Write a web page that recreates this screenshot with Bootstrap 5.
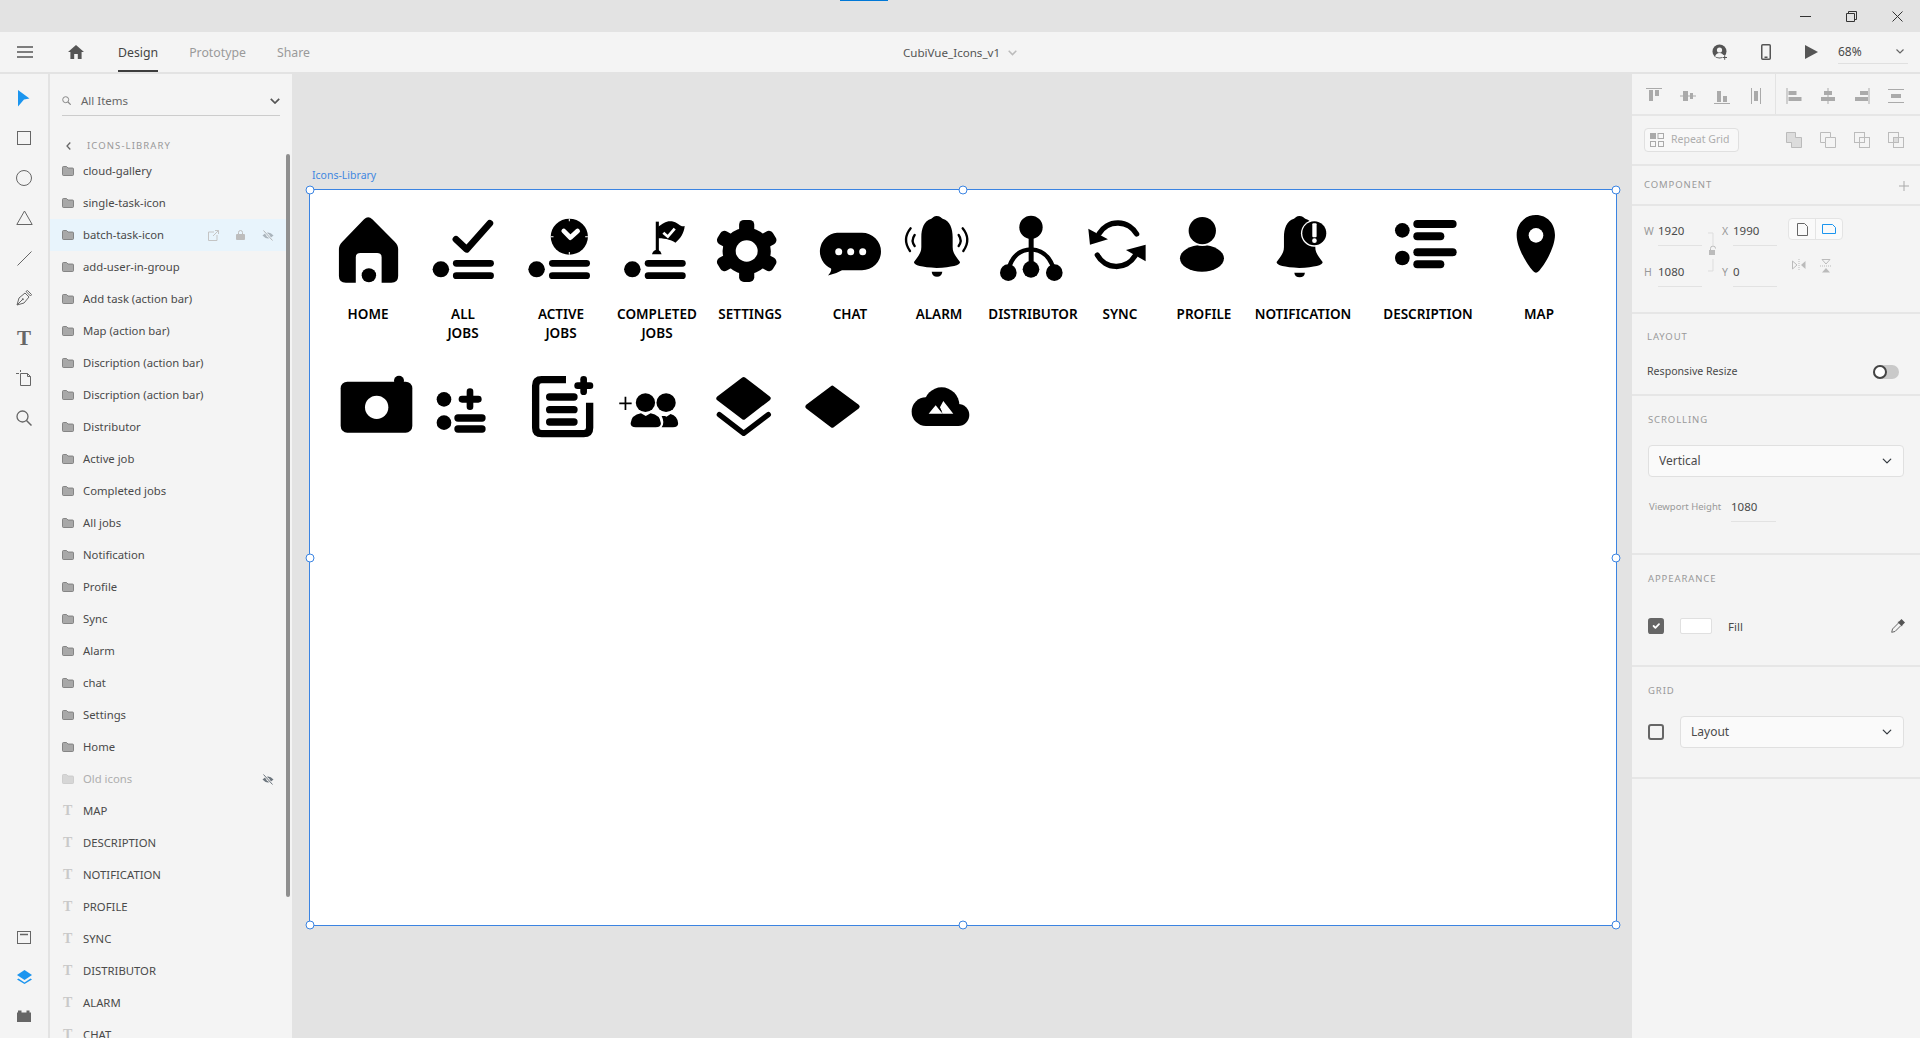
<!DOCTYPE html>
<html lang="en">
<head>
    <meta charset="UTF-8">
    <meta name="viewport" content="width=device-width, initial-scale=1.0">
    <title>CubiVue_Icons_v1</title>

    <link href="https://cdn.jsdelivr.net/npm/bootstrap@5.3.0/dist/css/bootstrap.min.css" rel="stylesheet">

    <style>
        html, body { height: 100%; overflow: hidden; }
        body { font-family: "Noto Sans", "Open Sans", sans-serif; font-size: 12px; color: #4a4a4a; background: #e3e3e3; }
        .app { width: 1920px; height: 1038px; }

        /* title bar + toolbar */
        .title-bar { height: 32px; background: #e3e3e3; position: relative; }
        .title-accent { position: absolute; left: 840px; top: 0; width: 48px; height: 1px; background: #0078d7; }
        .win-btn { width: 46px; height: 32px; }
        .tool-bar { height: 42px; background: #f4f4f4; border-bottom: 2px solid #e3e3e3; }
        .tb-btn-a { width: 50px; }
        .tb-btn-b { width: 52px; }
        .tb-nav { margin-left: 16px; gap: 31px; }
        .tb-nav .nav-link { padding: 0; height: 40px; line-height: 41px; font-size: 12.3px; color: #9a9a9a; }
        .tb-nav .nav-link.active { color: #444; border-bottom: 2px solid #3d3d3d; }
        .doc-name { font-size: 11.6px; color: #555; gap: 8px; padding-top: 1px; }
        .tb-btn-c { width: 46px; }
        .zoom-box { width: 70px; height: 24px; margin: 0 12px 0 3px; border-bottom: 1px solid #e0e0e0; font-size: 12px; }

        /* left rail */
        .main-area { height: 964px; }
        .tool-rail { width: 50px; background: #f4f4f4; border-right: 2px solid #e3e3e3; padding: 4px 0 2px; }
        .rail-btn { height: 40px; }
        .rail-btn-sm { height: 39.5px; }
        .rail-t { font-family: "Liberation Serif", serif; font-weight: 700; font-size: 21px; color: #666; line-height: 1; }

        /* layers */
        .layers-panel { width: 242px; background: #f4f4f4; position: relative; overflow: hidden; }
        .search-row { margin: 10px 12px 0; height: 32px; padding-top: 2px; border-bottom: 1px solid #ccc; color: #666; font-size: 11.5px; }
        .search-row span { margin-left: 10px; }
        .back-row { height: 20px; margin: 20px 0 0 16px; margin-bottom: -1px; }
        .back-label { margin-left: 16px; font-size: 9.5px; letter-spacing: 1.1px; color: #999; }
        .layer-list { border-radius: 0; }
        .layer-row { height: 32px; padding: 0 0 0 12px; background: transparent; border: 0; color: #4a4a4a; font-size: 11.3px; margin-right: 2px; }
        .layer-row.is-hover { background: #e8f4fc; }
        .layer-row.is-off { color: #aeaeae; }
        .layer-ic { width: 21px; flex: none; }
        .layer-t { width: 21px; flex: none; padding-left: 1px; font-family: "Liberation Serif", serif; font-weight: 700; font-size: 14px; color: #c9c9c9; line-height: 1; }
        .row-tools { margin-left: auto; padding-right: 16px; gap: 17px; }
        .scroll-thumb { position: absolute; right: 2px; top: 80px; width: 4px; height: 743px; border-radius: 2px; background: #8f8f8f; }

        /* canvas */
        .canvas-area { position: relative; background: #e3e3e3; overflow: hidden; }
        .board-name { position: absolute; left: 20px; top: 94px; font-size: 10.5px; color: #3f87e0; }
        .art-board { position: absolute; left: 17px; top: 115px; width: 1308px; height: 737px; background: #fff; border: 1px solid #3b84e2; }
        .art-icons { position: absolute; left: 0; top: 0; width: 1306px; height: 735px; }
        .handle { position: absolute; width: 9px; height: 9px; border-radius: 50%; background: #fff; border: 1px solid #3b84e2; transform: translate(-50%, -50%); }
        .h-l { left: 0; } .h-c { left: 50%; } .h-r { left: 100%; }
        .h-t { top: 0; } .h-m { top: 50%; } .h-b { top: 100%; }
        .icon-label { position: absolute; top: 115px; width: 120px; margin-left: -60px; text-align: center; font-size: 13.5px; line-height: 19px; font-weight: 600; color: #000; }
        .l-home { left: 58px; } .l-all { left: 153px; } .l-active { left: 251px; } .l-done { left: 347px; }
        .l-set { left: 440px; } .l-chat { left: 540px; } .l-alarm { left: 629px; } .l-dist { left: 723px; }
        .l-sync { left: 810px; } .l-prof { left: 894px; } .l-notif { left: 993px; } .l-desc { left: 1118px; } .l-map { left: 1229px; }

        /* right panel */
        .props-panel { width: 290px; background: #f4f4f4; border-left: 2px solid #e3e3e3; }
        .sec { border-bottom: 2px solid #e6e6e6; }
        .sec-align { height: 42px; }
        .align-group { width: 144px; gap: 18px; padding: 3px 0 0 14px; }
        .align-group + .align-group { border-left: 1px solid #e3e3e3; padding-left: 10px; width: 146px; gap: 18px; }
        .sec-repeat { height: 50px; padding: 0 0 0 12px; }
        .repeat-btn { width: 95px; height: 24px; border: 1px solid #e0e0e0; border-radius: 4px; background: #f8f8f8; color: #adadad; font-size: 10.5px; gap: 7px; padding-left: 5px; }
        .bool-group { margin-left: 47px; gap: 18px; }
        .sec-comp { height: 40px; padding: 1px 11px 0 12px; }
        .sec-title { font-size: 9.5px; letter-spacing: .9px; color: #999; }
        .sec-dim { height: 108px; padding: 11px 0 0 12px; }
        .dim-grid { display: grid; grid-template-columns: 14px 44px 20px 11px 44px; grid-auto-rows: 29px; row-gap: 12px; align-items: center; }
        .dim-lab { font-size: 10.5px; color: #999; }
        .dim-val { height: 29px; line-height: 28px; border-bottom: 1px solid #e2e2e2; font-size: 11.5px; color: #4a4a4a; }
        .dim-lock { grid-column: 3; grid-row: 1 / span 2; }
        .orient-group { margin: 1px 0 0 11px; }
        .orient-btns { width: 55px; height: 22px; border: 1px solid #e4e4e4; border-radius: 4px; background: #fafafa; }
        .orient-btns > div { flex: 1; }
        .orient-btns > div + div { border-left: 1px solid #e4e4e4; }
        .flip-btns { gap: 14px; margin: 19px 0 0 4px; }
        .sec-layout { height: 82px; padding: 16px 21px 0 15px; }
        .resize-row { margin-top: 20px; font-size: 10.6px; color: #4a4a4a; }
        .mini-switch { width: 26px; height: 14px; border-radius: 7px; background: #c9c9c9; position: relative; }
        .mini-switch::before { content: ""; position: absolute; left: 0; top: 0; width: 14px; height: 14px; border-radius: 50%; background: #fff; border: 2px solid #444; }
        .sec-scroll { height: 159px; padding: 17px 16px 0 16px; }
        .prop-select { height: 32px; padding: 0 24px 0 10px; font-size: 12px; color: #4a4a4a; background-color: #fafafa; border: 1px solid #e0e0e0; border-radius: 4px; background-position: right 11px center; background-size: 10px; box-shadow: none; }
        .scroll-select { margin-top: 18px; }
        .view-row { margin-top: 15px; }
        .view-lab { width: 83px; font-size: 9.5px; color: #999; padding-left: 1px; }
        .view-val { width: 45px; height: 30px; line-height: 30px; border-bottom: 1px solid #e2e2e2; font-size: 11.5px; }
        .sec-appear { height: 112px; padding: 17px 15px 0 16px; }
        .fill-row { margin-top: 32px; height: 16px; font-size: 11.5px; }
        .prop-check { width: 16px; height: 16px; margin: 0; flex: none; border: 2px solid #666; border-radius: 3px; background-color: transparent; box-shadow: none; }
        .prop-check:checked { background-color: #666; border-color: #666; }
        .swatch { width: 32px; height: 16px; margin: 0 16px; border: 1px solid #e0e0e0; border-radius: 2px; background: #fff; }
        .sec-grid { height: 112px; padding: 17px 16px 0 16px; }
        .grid-row { margin-top: 18px; gap: 16px; }
    </style>
</head>
<body>
    <div class="app d-flex flex-column">

        <div class="title-bar d-flex justify-content-end">
            <div class="title-accent"></div>
            <div class="win-btn d-flex align-items-center justify-content-center">
                <svg width="11" height="11" viewBox="0 0 11 11"><path d="M0 5.5h11" stroke="#333" fill="none"/></svg>
            </div>
            <div class="win-btn d-flex align-items-center justify-content-center">
                <svg width="11" height="11" viewBox="0 0 11 11"><path d="M.5 2.5h8v8h-8zM2.5 2.5v-2h8v8h-2" stroke="#333" fill="none"/></svg>
            </div>
            <div class="win-btn d-flex align-items-center justify-content-center">
                <svg width="11" height="11" viewBox="0 0 11 11"><path d="M.5.5l10 10M10.5.5l-10 10" stroke="#333" fill="none"/></svg>
            </div>
        </div>

        <header class="tool-bar d-flex align-items-stretch">
            <div class="flex-grow-1 d-flex align-items-center w-50">
                <div class="tb-btn-a d-flex justify-content-center">
                    <svg width="16" height="12" viewBox="0 0 16 12"><path d="M0 1h16M0 6h16M0 11h16" stroke="#555" stroke-width="1.6"/></svg>
                </div>
                <div class="tb-btn-b d-flex justify-content-center">
                    <svg width="16" height="14" viewBox="0 0 16 14"><path d="M8 0L0 7h2.4v7h3.8V9h3.6v5h3.8V7H16z" fill="#555"/></svg>
                </div>
                <nav class="nav tb-nav flex-nowrap">
                    <a class="nav-link active" href="#">Design</a>
                    <a class="nav-link" href="#">Prototype</a>
                    <a class="nav-link" href="#">Share</a>
                </nav>
            </div>
            <div class="doc-name d-flex align-items-center flex-shrink-0 text-nowrap">
                <span>CubiVue_Icons_v1</span>
                <svg width="9" height="6" viewBox="0 0 9 6"><path d="M.7.8l3.8 3.8L8.3.8" stroke="#bbb" stroke-width="1.5" fill="none"/></svg>
            </div>
            <div class="flex-grow-1 d-flex align-items-center justify-content-end w-50">
                <div class="tb-btn-c d-flex justify-content-center">
                    <svg width="16" height="16" viewBox="0 0 16 16"><circle cx="7.5" cy="7.5" r="7" fill="#555"/><circle cx="7.5" cy="6" r="2.6" fill="#f4f4f4"/><path d="M3 12.5q1-3.5 4.5-3.5t4.500 3.500q-4.500 2-9 0z" fill="#f4f4f4"/><path d="M10 13.5h5M12.5 11v5" stroke="#f4f4f4" stroke-width="3"/><path d="M10.5 13.5h4.500M12.700 11.200v4.600" stroke="#555"/></svg>
                </div>
                <div class="tb-btn-c d-flex justify-content-center">
                    <svg width="10" height="16" viewBox="0 0 10 16"><rect x=".75" y=".75" width="8.5" height="14.5" rx="1" fill="none" stroke="#555" stroke-width="1.5"/><rect x="3.5" y="12.5" width="3" height="1.5" fill="#555"/></svg>
                </div>
                <div class="tb-btn-c d-flex justify-content-center">
                    <svg width="13" height="14" viewBox="0 0 13 14"><path d="M0 0l13 7L0 14z" fill="#555"/></svg>
                </div>
                <div class="zoom-box d-flex align-items-center justify-content-between">
                    <span>68%</span>
                    <svg class="me-1" width="8" height="5" viewBox="0 0 8 5"><path d="M.5.5L4 4 7.5.5" stroke="#666" stroke-width="1.2" fill="none"/></svg>
                </div>
            </div>
        </header>

        <div class="main-area d-flex">

            <aside class="tool-rail d-flex flex-column flex-shrink-0">
                <div class="rail-btn d-flex align-items-center justify-content-center">
                    <svg width="12" height="17" viewBox="0 0 12 17"><path d="M0 0l11.5 8.5-5.500 1L0 16.500z" fill="#1b95ef"/></svg>
                </div>
                <div class="rail-btn d-flex align-items-center justify-content-center">
                    <svg width="14" height="14" viewBox="0 0 14 14"><rect x=".5" y=".5" width="13" height="13" fill="none" stroke="#666"/></svg>
                </div>
                <div class="rail-btn d-flex align-items-center justify-content-center">
                    <svg width="16" height="16" viewBox="0 0 16 16"><circle cx="8" cy="8" r="7.5" fill="none" stroke="#666"/></svg>
                </div>
                <div class="rail-btn d-flex align-items-center justify-content-center">
                    <svg width="17" height="15" viewBox="0 0 17 15"><path d="M8.5 0L.8 13.5h15.400z" fill="none" stroke="#666"/></svg>
                </div>
                <div class="rail-btn d-flex align-items-center justify-content-center">
                    <svg width="15" height="15" viewBox="0 0 15 15"><path d="M.5 14.5l14-14" stroke="#666" fill="none"/></svg>
                </div>
                <div class="rail-btn d-flex align-items-center justify-content-center">
                    <svg width="16" height="16" viewBox="0 0 16 16"><path d="M1 15l2-7 6-5 4 4-5 6zM1 15l5-5M10 1.5l4.5 4.500 1-1.500L11.500.5z" fill="none" stroke="#666"/><circle cx="6.8" cy="9.2" r="1" fill="#666"/></svg>
                </div>
                <div class="rail-btn d-flex align-items-center justify-content-center"><span class="rail-t">T</span></div>
                <div class="rail-btn d-flex align-items-center justify-content-center">
                    <svg width="16" height="16" viewBox="0 0 16 16"><path d="M4.5 3.5h7l3 3v9h-10zM11.5 3.5v3h3M0 3.5h3M4.5 0v2" fill="none" stroke="#666"/></svg>
                </div>
                <div class="rail-btn d-flex align-items-center justify-content-center">
                    <svg width="16" height="16" viewBox="0 0 16 16"><circle cx="6.5" cy="6.5" r="5.5" fill="none" stroke="#666" stroke-width="1.3"/><path d="M10.5 10.5l5 5" stroke="#666" stroke-width="1.5"/></svg>
                </div>
                <div class="rail-btn-sm mt-auto d-flex align-items-center justify-content-center">
                    <svg width="14" height="13" viewBox="0 0 14 13"><rect x=".5" y=".5" width="13" height="12" fill="none" stroke="#666"/><path d="M3 3.5h8" stroke="#666" stroke-width="1.5"/></svg>
                </div>
                <div class="rail-btn-sm d-flex align-items-center justify-content-center">
                    <svg width="15" height="14" viewBox="0 0 15 14"><path d="M7.5 0L15 5l-7.5 5L0 5z" fill="#1b95ef"/><path d="M1.5 8.5l6 4 6-4 1.5 1-7.500 4.500L0 9.500z" fill="#1b95ef"/></svg>
                </div>
                <div class="rail-btn-sm d-flex align-items-center justify-content-center">
                    <svg width="14" height="12" viewBox="0 0 14 12"><path d="M0 2.5h1V.5h3.500v2h5V.5h3v2h1.500V12H0z" fill="#666"/></svg>
                </div>
            </aside>

            <section class="layers-panel flex-shrink-0">
                <svg width="0" height="0" class="position-absolute">
                    <symbol id="fld" viewBox="0 0 12 10"><path d="M.5 1.5q0-1 1-1h3l1.500 1.500h4.500q1 0 1 1v5.500q0 1-1 1h-9q-1 0-1-1z" fill="#a8a8a8" stroke="#727272" stroke-width=".8"/></symbol>
                    <symbol id="fld-off" viewBox="0 0 12 10"><path d="M.5 1.5q0-1 1-1h3l1.500 1.500h4.500q1 0 1 1v5.500q0 1-1 1h-9q-1 0-1-1z" fill="#d6d6d6" stroke="#c8c8c8" stroke-width=".8"/></symbol>
                    <symbol id="eye" viewBox="0 0 12 11"><path d="M.5 5.5Q6-.5 11.500 5.500 6 11.500.5 5.500z" fill="currentColor"/><circle cx="6" cy="5.5" r="1.5" fill="#f4f4f4"/><path d="M1.5.5l9 10" stroke="#f4f4f4" stroke-width="2.2"/><path d="M1.5.5l9 10" stroke="currentColor" stroke-width="1"/></symbol>
                </svg>
                <div class="search-row d-flex align-items-center">
                    <svg width="9" height="9" viewBox="0 0 9 9"><circle cx="3.7" cy="3.7" r="3" fill="none" stroke="#888"/><path d="M6 6l2.7 2.700" stroke="#888" stroke-width="1.2"/></svg>
                    <span class="flex-grow-1">All Items</span>
                    <svg width="10" height="6" viewBox="0 0 10 6"><path d="M.8.8L5 5 9.2.8" stroke="#555" stroke-width="1.7" fill="none"/></svg>
                </div>
                <div class="back-row d-flex align-items-center">
                    <svg width="5" height="8" viewBox="0 0 5 8"><path d="M4.3.5L1 4l3.300 3.500" stroke="#666" stroke-width="1.3" fill="none"/></svg>
                    <span class="back-label">ICONS-LIBRARY</span>
                </div>
                <div class="list-group list-group-flush layer-list">
                    <div class="list-group-item layer-row d-flex align-items-center"><span class="layer-ic"><svg width="12" height="10" class="d-block"><use href="#fld"/></svg></span>cloud-gallery</div>
                    <div class="list-group-item layer-row d-flex align-items-center"><span class="layer-ic"><svg width="12" height="10" class="d-block"><use href="#fld"/></svg></span>single-task-icon</div>
                    <div class="list-group-item layer-row is-hover d-flex align-items-center"><span class="layer-ic"><svg width="12" height="10" class="d-block"><use href="#fld"/></svg></span>batch-task-icon
                        <span class="row-tools d-flex align-items-center">
                            <svg width="11" height="11" viewBox="0 0 11 11"><path d="M6 2H.5v8.500H9V5M5 6l5.500-5.500M7 .5h3.500V4" fill="none" stroke="#c4c4c4"/></svg>
                            <svg width="9" height="10" viewBox="0 0 9 10"><path d="M2.5 4V2.500a2 2 0 0 1 4 0V4" fill="none" stroke="#bdbdbd"/><rect y="4" width="9" height="6" rx="1" fill="#bdbdbd"/></svg>
                            <svg width="12" height="11" class="text-secondary opacity-50"><use href="#eye"/></svg>
                        </span>
                    </div>
                    <div class="list-group-item layer-row d-flex align-items-center"><span class="layer-ic"><svg width="12" height="10" class="d-block"><use href="#fld"/></svg></span>add-user-in-group</div>
                    <div class="list-group-item layer-row d-flex align-items-center"><span class="layer-ic"><svg width="12" height="10" class="d-block"><use href="#fld"/></svg></span>Add task (action bar)</div>
                    <div class="list-group-item layer-row d-flex align-items-center"><span class="layer-ic"><svg width="12" height="10" class="d-block"><use href="#fld"/></svg></span>Map (action bar)</div>
                    <div class="list-group-item layer-row d-flex align-items-center"><span class="layer-ic"><svg width="12" height="10" class="d-block"><use href="#fld"/></svg></span>Discription (action bar)</div>
                    <div class="list-group-item layer-row d-flex align-items-center"><span class="layer-ic"><svg width="12" height="10" class="d-block"><use href="#fld"/></svg></span>Discription (action bar)</div>
                    <div class="list-group-item layer-row d-flex align-items-center"><span class="layer-ic"><svg width="12" height="10" class="d-block"><use href="#fld"/></svg></span>Distributor</div>
                    <div class="list-group-item layer-row d-flex align-items-center"><span class="layer-ic"><svg width="12" height="10" class="d-block"><use href="#fld"/></svg></span>Active job</div>
                    <div class="list-group-item layer-row d-flex align-items-center"><span class="layer-ic"><svg width="12" height="10" class="d-block"><use href="#fld"/></svg></span>Completed jobs</div>
                    <div class="list-group-item layer-row d-flex align-items-center"><span class="layer-ic"><svg width="12" height="10" class="d-block"><use href="#fld"/></svg></span>All jobs</div>
                    <div class="list-group-item layer-row d-flex align-items-center"><span class="layer-ic"><svg width="12" height="10" class="d-block"><use href="#fld"/></svg></span>Notification</div>
                    <div class="list-group-item layer-row d-flex align-items-center"><span class="layer-ic"><svg width="12" height="10" class="d-block"><use href="#fld"/></svg></span>Profile</div>
                    <div class="list-group-item layer-row d-flex align-items-center"><span class="layer-ic"><svg width="12" height="10" class="d-block"><use href="#fld"/></svg></span>Sync</div>
                    <div class="list-group-item layer-row d-flex align-items-center"><span class="layer-ic"><svg width="12" height="10" class="d-block"><use href="#fld"/></svg></span>Alarm</div>
                    <div class="list-group-item layer-row d-flex align-items-center"><span class="layer-ic"><svg width="12" height="10" class="d-block"><use href="#fld"/></svg></span>chat</div>
                    <div class="list-group-item layer-row d-flex align-items-center"><span class="layer-ic"><svg width="12" height="10" class="d-block"><use href="#fld"/></svg></span>Settings</div>
                    <div class="list-group-item layer-row d-flex align-items-center"><span class="layer-ic"><svg width="12" height="10" class="d-block"><use href="#fld"/></svg></span>Home</div>
                    <div class="list-group-item layer-row is-off d-flex align-items-center"><span class="layer-ic"><svg width="12" height="10" class="d-block"><use href="#fld-off"/></svg></span>Old icons
                        <span class="row-tools d-flex align-items-center"><svg width="12" height="11" class="text-secondary"><use href="#eye"/></svg></span>
                    </div>
                    <div class="list-group-item layer-row d-flex align-items-center"><span class="layer-t">T</span>MAP</div>
                    <div class="list-group-item layer-row d-flex align-items-center"><span class="layer-t">T</span>DESCRIPTION</div>
                    <div class="list-group-item layer-row d-flex align-items-center"><span class="layer-t">T</span>NOTIFICATION</div>
                    <div class="list-group-item layer-row d-flex align-items-center"><span class="layer-t">T</span>PROFILE</div>
                    <div class="list-group-item layer-row d-flex align-items-center"><span class="layer-t">T</span>SYNC</div>
                    <div class="list-group-item layer-row d-flex align-items-center"><span class="layer-t">T</span>DISTRIBUTOR</div>
                    <div class="list-group-item layer-row d-flex align-items-center"><span class="layer-t">T</span>ALARM</div>
                    <div class="list-group-item layer-row d-flex align-items-center"><span class="layer-t">T</span>CHAT</div>
                </div>
                <div class="scroll-thumb"></div>
            </section>

            <main class="canvas-area flex-grow-1">
                <div class="board-name">Icons-Library</div>
                <div class="art-board">
                    <!-- icons are in page pixels, the groups use the scale of the crop they were measured on -->
                    <svg class="art-icons" viewBox="310 190 1306 735">
                        <g transform="translate(300 170) scale(.3444 .3333)">
                            <!-- home -->
                            <path d="M198 142q6 0 12 6L275 215q10 10 10 22V318q0 20-20 20H237V262q0-13-13-13H175q-13 0-13 13V338H133q-20 0-20-20V237q0-12 10-22L186 148q6-6 12-6z"/>
                            <circle cx="200" cy="316" r="21"/>
                            <!-- all jobs -->
                            <circle cx="409" cy="298" r="24"/><rect x="444" y="270" width="119" height="20" rx="10"/><rect x="444" y="307" width="119" height="20" rx="10"/>
                            <path d="M453 208L484 238L551 160" fill="none" stroke="#000" stroke-width="20" stroke-linecap="round" stroke-linejoin="round"/>
                            <!-- active jobs -->
                            <circle cx="687" cy="298" r="24"/><rect x="723" y="270" width="119" height="20" rx="10"/><rect x="723" y="307" width="119" height="20" rx="10"/>
                            <circle cx="782" cy="200" r="54"/>
                            <path d="M766 183L785 203L806 183" fill="none" stroke="#fff" stroke-width="14" stroke-linecap="round" stroke-linejoin="round"/>
                            <path d="M782 146v8M782 246v8M728 200h8M828 200h8" stroke="#fff" stroke-width="3"/>
                            <!-- completed jobs -->
                            <circle cx="965" cy="298" r="24"/><rect x="1001" y="270" width="119" height="20" rx="10"/><rect x="1001" y="307" width="119" height="20" rx="10"/>
                            <rect x="1033" y="155" width="9" height="90"/>
                            <path d="M1022 253q2-12 14-14h4q8 3 10 14z"/>
                            <path d="M1040 170C1055 160 1065 150 1085 155C1100 160 1105 172 1117 168C1115 190 1105 205 1090 218C1080 212 1065 205 1040 205z"/>
                            <path d="M1055 188L1068 200L1088 176" fill="none" stroke="#fff" stroke-width="8"/>
                            <!-- settings -->
                            <g transform="translate(1297 243)">
                                <circle r="70"/>
                                <rect x="-22" y="-93" width="44" height="50" rx="14"/>
                                <rect x="-22" y="-93" width="44" height="50" rx="14" transform="rotate(60)"/>
                                <rect x="-22" y="-93" width="44" height="50" rx="14" transform="rotate(120)"/>
                                <rect x="-22" y="-93" width="44" height="50" rx="14" transform="rotate(180)"/>
                                <rect x="-22" y="-93" width="44" height="50" rx="14" transform="rotate(240)"/>
                                <rect x="-22" y="-93" width="44" height="50" rx="14" transform="rotate(300)"/>
                                <circle r="32" fill="#fff"/>
                            </g>
                            <!-- group add -->
                            <path d="M927 700h36M945 680v40" stroke="#000" stroke-width="5" fill="none"/>
                            <circle cx="1003" cy="698" r="28"/><circle cx="1063" cy="698" r="28"/>
                            <path d="M960 760q2-25 30-30l14 8 14-8q28 5 30 30q0 12-15 12h-58q-15 0-15-12z"/>
                            <path d="M1060 738l4 2 12-8q20 5 22 28q0 12-15 12h-33q10-14 0-34z"/>
                        </g>
                        <!-- chat -->
                        <path d="M837 232.7H862A19 18.8 0 0 1 862 270.3H842Q836 274 828 275.5Q832 271 831 268.5A19 18.8 0 0 1 837 232.7z"/>
                        <circle cx="838.7" cy="251.7" r="3.5" fill="#fff"/><circle cx="850.7" cy="251.7" r="3.5" fill="#fff"/><circle cx="862.7" cy="251.7" r="3.5" fill="#fff"/>
                        <g transform="translate(840 170) scale(.3333)">
                            <!-- alarm -->
                            <path id="bell" d="M290 138c10 0 14 6 18 8c22 6 30 30 30 55v30c0 20 12 30 22 45q2 14-70 18q-70-4-68-18c10-15 22-25 22-45v-30c0-25 8-49 30-55c4-2 8-8 16-8z"/>
                            <path d="M275 305h32q-2 15-16 15t-16-15z"/>
                            <path d="M212 175Q185 208 210 243M224 195Q212 212 224 228M368 175Q395 208 370 243M356 195Q368 212 356 228" fill="none" stroke="#000" stroke-width="7" stroke-linecap="round"/>
                            <!-- distributor -->
                            <circle cx="573" cy="172" r="35"/><rect x="566" y="200" width="15" height="100"/>
                            <path d="M505 300Q520 240 573 238Q625 240 642 300" fill="none" stroke="#000" stroke-width="13"/>
                            <circle cx="505" cy="308" r="25"/><circle cx="573" cy="298" r="25"/><circle cx="643" cy="308" r="25"/>
                            <!-- sync -->
                            <path d="M890 192A65 65 0 0 0 778 190M772 255A65 65 0 0 0 885 258" fill="none" stroke="#000" stroke-width="16" stroke-linecap="round"/>
                            <path d="M745 176L804 208L750 224zM917 224L858 240L917 274z"/>
                            <!-- profile -->
                            <ellipse cx="1086" cy="265" rx="66" ry="40"/><circle cx="1087" cy="182" r="46" fill="#fff"/><circle cx="1087" cy="182" r="41"/>
                            <!-- notification -->
                            <use href="#bell" x="1088"/>
                            <path d="M1363 308h32q-2 14-16 14t-16-14z"/>
                            <circle cx="1423" cy="190" r="40" fill="#fff"/><circle cx="1423" cy="190" r="36"/>
                            <rect x="1417" y="160" width="13" height="42" rx="3" fill="#fff"/><circle cx="1423.5" cy="212" r="7" fill="#fff"/>
                        </g>
                        <g transform="translate(1340 170) scale(.3333)">
                            <!-- description -->
                            <circle cx="187" cy="181" r="22"/><circle cx="187" cy="264" r="22"/>
                            <rect x="220" y="150" width="130" height="24" rx="12"/><rect x="220" y="187" width="93" height="24" rx="12"/><rect x="220" y="235" width="130" height="24" rx="12"/><rect x="220" y="271" width="93" height="24" rx="12"/>
                            <!-- map -->
                            <path d="M588 135C622 135 645 162 645 195C645 235 610 290 596 304Q588 312 580 304C566 290 530 235 530 195C530 162 554 135 588 135z"/>
                            <circle cx="588" cy="196" r="22" fill="#fff"/>
                        </g>
                        <g transform="translate(320 360) scale(.3333)">
                            <!-- camera -->
                            <rect x="62" y="65" width="215" height="153" rx="20"/><circle cx="237" cy="62" r="15"/><circle cx="170" cy="142" r="35" fill="#fff"/>
                            <!-- add to list -->
                            <circle cx="372" cy="118" r="22"/><circle cx="372" cy="188" r="22"/>
                            <rect x="416" y="107" width="69" height="21" rx="10"/><rect x="440" y="85" width="20" height="65" rx="10"/>
                            <rect x="403" y="163" width="94" height="22" rx="11"/><rect x="403" y="196" width="94" height="22" rx="11"/>
                            <!-- add note -->
                            <path d="M738 59H665Q647 59 647 77V203Q647 221 665 221H791Q809 221 809 203V128" fill="none" stroke="#000" stroke-width="22"/>
                            <rect x="678" y="100" width="95" height="22" rx="11"/><rect x="678" y="138" width="95" height="22" rx="11"/><rect x="678" y="175" width="95" height="22" rx="11"/>
                            <rect x="763" y="67" width="57" height="20" rx="10"/><rect x="781" y="48" width="20" height="57" rx="10"/>
                        </g>
                        <g transform="translate(640 360) scale(.3333)">
                            <!-- layers -->
                            <path d="M311 58L385 115L311 172L236 115z" stroke="#000" stroke-width="14" stroke-linejoin="round"/>
                            <path d="M238 164L311 220L385 164" fill="none" stroke="#000" stroke-width="16" stroke-linecap="round" stroke-linejoin="round"/>
                            <!-- diamond -->
                            <path d="M577 84L652 140L577 196L503 140z" stroke="#000" stroke-width="14" stroke-linejoin="round"/>
                            <!-- cloud gallery -->
                            <circle cx="858" cy="155" r="43"/><circle cx="905" cy="135" r="53"/><circle cx="955" cy="165" r="33"/><rect x="858" y="150" width="97" height="48"/>
                            <path d="M866 161L887 136L908 161zM900 142L910 123L940 161H908z" fill="#fff"/>
                            <path d="M894 136l10 18" stroke="#000" stroke-width="3"/>
                        </g>
                    </svg>

                    <div class="icon-label l-home">HOME</div>
                    <div class="icon-label l-all">ALL<br>JOBS</div>
                    <div class="icon-label l-active">ACTIVE<br>JOBS</div>
                    <div class="icon-label l-done">COMPLETED<br>JOBS</div>
                    <div class="icon-label l-set">SETTINGS</div>
                    <div class="icon-label l-chat">CHAT</div>
                    <div class="icon-label l-alarm">ALARM</div>
                    <div class="icon-label l-dist">DISTRIBUTOR</div>
                    <div class="icon-label l-sync">SYNC</div>
                    <div class="icon-label l-prof">PROFILE</div>
                    <div class="icon-label l-notif">NOTIFICATION</div>
                    <div class="icon-label l-desc">DESCRIPTION</div>
                    <div class="icon-label l-map">MAP</div>

                    <span class="handle h-l h-t"></span><span class="handle h-c h-t"></span><span class="handle h-r h-t"></span>
                    <span class="handle h-l h-m"></span><span class="handle h-r h-m"></span>
                    <span class="handle h-l h-b"></span><span class="handle h-c h-b"></span><span class="handle h-r h-b"></span>
                </div>
            </main>

            <aside class="props-panel flex-shrink-0">
                <div class="sec sec-align d-flex">
                    <div class="align-group d-flex align-items-center">
                        <svg width="16" height="16" viewBox="0 0 16 16" fill="#aaa"><path d="M0 .5h16" stroke="#aaa"/><rect x="3" y="2" width="4" height="11"/><rect x="9" y="2" width="4" height="6"/></svg>
                        <svg width="16" height="16" viewBox="0 0 16 16" fill="#aaa"><path d="M0 8h16" stroke="#aaa"/><rect x="3" y="3" width="5" height="10"/><rect x="10" y="5" width="3" height="6"/></svg>
                        <svg width="16" height="16" viewBox="0 0 16 16" fill="#aaa"><path d="M0 15.5h16" stroke="#aaa"/><rect x="3" y="3" width="4" height="11"/><rect x="9" y="8" width="4" height="6"/></svg>
                        <svg width="16" height="16" viewBox="0 0 16 16" fill="#aaa"><path d="M3.5 0v16M12.500 0v16" stroke="#aaa"/><rect x="6" y="3" width="4" height="10"/></svg>
                    </div>
                    <div class="align-group d-flex align-items-center">
                        <svg width="16" height="16" viewBox="0 0 16 16" fill="#aaa"><path d="M1 0v16" stroke="#aaa"/><rect x="2.5" y="3" width="8" height="4"/><rect x="2.5" y="9" width="13" height="4"/></svg>
                        <svg width="16" height="16" viewBox="0 0 16 16" fill="#aaa"><path d="M8 0v16" stroke="#aaa"/><rect x="4" y="3" width="8" height="4"/><rect x="1" y="9" width="14" height="4"/></svg>
                        <svg width="16" height="16" viewBox="0 0 16 16" fill="#aaa"><path d="M15 0v16" stroke="#aaa"/><rect x="6" y="3" width="8" height="4"/><rect x="1" y="9" width="13" height="4"/></svg>
                        <svg width="16" height="16" viewBox="0 0 16 16" fill="#aaa"><path d="M0 1.5h16M0 14.500h16" stroke="#aaa"/><rect x="3" y="6" width="10" height="4"/></svg>
                    </div>
                </div>
                <div class="sec sec-repeat d-flex align-items-center">
                    <div class="repeat-btn d-flex align-items-center">
                        <svg width="14" height="14" viewBox="0 0 14 14"><rect width="6" height="6" fill="#aaa"/><rect x="8" y=".5" width="5.5" height="5" fill="none" stroke="#aaa"/><rect x=".5" y="8.5" width="5" height="5" fill="none" stroke="#aaa"/><rect x="8.5" y="8.5" width="5" height="5" fill="none" stroke="#aaa"/></svg>
                        <span>Repeat Grid</span>
                    </div>
                    <div class="bool-group d-flex">
                        <svg width="16" height="16" viewBox="0 0 16 16"><path d="M.5.5h9v5h6v10h-10v-5h-5z" fill="#dcdcdc" stroke="#bbb"/></svg>
                        <svg width="16" height="16" viewBox="0 0 16 16"><path d="M.5.5h10v5h5v10h-10v-5h-5z" fill="none" stroke="#bbb"/><path d="M5.5 10.5v-5h5" fill="none" stroke="#bbb"/></svg>
                        <svg width="16" height="16" viewBox="0 0 16 16"><rect x=".5" y=".5" width="10" height="10" fill="none" stroke="#bbb"/><rect x="5.5" y="5.5" width="10" height="10" fill="none" stroke="#bbb"/></svg>
                        <svg width="16" height="16" viewBox="0 0 16 16"><rect x="5.5" y="5.5" width="5" height="5" fill="#dcdcdc"/><rect x=".5" y=".5" width="10" height="10" fill="none" stroke="#bbb"/><rect x="5.5" y="5.5" width="10" height="10" fill="none" stroke="#bbb"/></svg>
                    </div>
                </div>
                <div class="sec sec-comp d-flex align-items-center justify-content-between">
                    <span class="sec-title">COMPONENT</span>
                    <svg width="10" height="10" viewBox="0 0 10 10"><path d="M0 5h10M5 0v10" stroke="#aaa"/></svg>
                </div>
                <div class="sec sec-dim d-flex">
                    <div class="dim-grid">
                        <span class="dim-lab">W</span><span class="dim-val">1920</span>
                        <span class="dim-lock d-flex justify-content-center">
                            <svg width="10" height="40" viewBox="0 0 10 40"><path d="M1 1h5v12M6 27v12H1" fill="none" stroke="#ddd"/><path d="M3.5 18.500v-2a2.500 2.500 0 0 1 5 0" fill="none" stroke="#bbb"/><rect x="2" y="18" width="6" height="5" fill="#bbb"/></svg>
                        </span>
                        <span class="dim-lab">X</span><span class="dim-val">1990</span>
                        <span class="dim-lab">H</span><span class="dim-val">1080</span>
                        <span class="dim-lab">Y</span><span class="dim-val">0</span>
                    </div>
                    <div class="orient-group">
                        <div class="orient-btns d-flex">
                            <div class="d-flex align-items-center justify-content-center">
                                <svg width="11" height="13" viewBox="0 0 11 13"><path d="M.5.5h7l3 3v9H.5z" fill="none" stroke="#666"/></svg>
                            </div>
                            <div class="d-flex align-items-center justify-content-center">
                                <svg width="14" height="10" viewBox="0 0 14 10"><path d="M.5.5h10l3 3v6H.5z" fill="none" stroke="#1b95ef"/></svg>
                            </div>
                        </div>
                        <div class="flip-btns d-flex">
                            <svg width="14" height="12" viewBox="0 0 14 12"><path d="M.5 2l4.500 4-4.500 4z" fill="none" stroke="#bbb"/><path d="M13.5 2L9 6l4.500 4z" fill="#bbb"/><path d="M7 0v12" stroke="#bbb" stroke-dasharray="1 1"/></svg>
                            <svg width="12" height="14" viewBox="0 0 12 14"><path d="M2 .5l4 4.500 4-4.500z" fill="none" stroke="#bbb"/><path d="M2 13.5L6 9l4 4.500z" fill="#bbb"/><path d="M0 7h12" stroke="#bbb" stroke-dasharray="1 1"/></svg>
                        </div>
                    </div>
                </div>
                <div class="sec sec-layout">
                    <div class="sec-title">LAYOUT</div>
                    <div class="resize-row d-flex align-items-center justify-content-between">
                        <span>Responsive Resize</span>
                        <span class="mini-switch"></span>
                    </div>
                </div>
                <div class="sec sec-scroll">
                    <div class="sec-title">SCROLLING</div>
                    <select class="form-select prop-select scroll-select"><option>Vertical</option></select>
                    <div class="view-row d-flex align-items-center">
                        <span class="view-lab">Viewport Height</span><span class="view-val">1080</span>
                    </div>
                </div>
                <div class="sec sec-appear">
                    <div class="sec-title">APPEARANCE</div>
                    <div class="fill-row d-flex align-items-center">
                        <input class="form-check-input prop-check" type="checkbox" checked>
                        <span class="swatch"></span>
                        <span class="flex-grow-1">Fill</span>
                        <svg width="14" height="14" viewBox="0 0 14 14"><path d="M7.500 4L1.500 10 .7 13.300 4 12.500l6-6" fill="none" stroke="#666"/><path d="M6.500 3l1.500-.5L10.500 0 14 3.500l-2.500 2.500-.5 1.500z" fill="#555"/></svg>
                    </div>
                </div>
                <div class="sec sec-grid">
                    <div class="sec-title">GRID</div>
                    <div class="grid-row d-flex align-items-center">
                        <input class="form-check-input prop-check" type="checkbox">
                        <select class="form-select prop-select"><option>Layout</option></select>
                    </div>
                </div>
            </aside>
        </div>
    </div>

    <script src="https://cdn.jsdelivr.net/npm/bootstrap@5.3.0/dist/js/bootstrap.bundle.min.js"></script>
</body>
</html>
